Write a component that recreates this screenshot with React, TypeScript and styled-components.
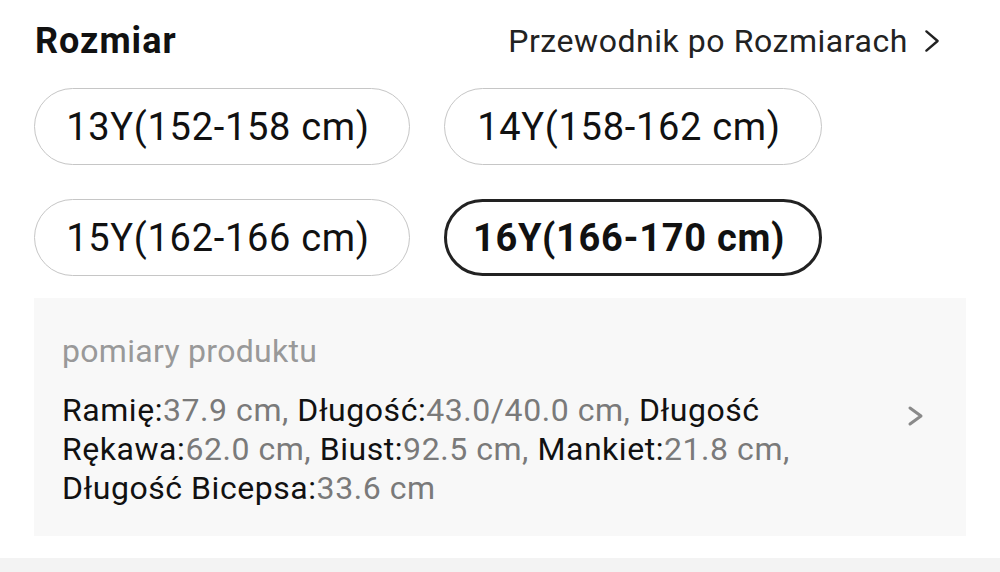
import React from "react";
import styled, { createGlobalStyle } from "styled-components";

const Global = createGlobalStyle`
  html, body { margin: 0; padding: 0; background: #fff; }
  body { font-family: Roboto, "Noto Sans", Arial, sans-serif; color: #111; }
  * { box-sizing: border-box; }
`;

const Page = styled.div`
  width: 1000px;
  height: 572px;
  overflow: hidden;
  display: flex;
  flex-direction: column;
`;

const Section = styled.section`
  padding: 0 34px;
  display: flex;
  flex-direction: column;
`;

const Header = styled.div`
  height: 82px;
  display: flex;
  align-items: center;
  justify-content: space-between;
`;

const Title = styled.h2`
  margin: 0 0 0 1px;
  font-size: 36px;
  letter-spacing: 1px;
  font-weight: 700;
  color: #111;
`;

const GuideLink = styled.a`
  display: flex;
  align-items: center;
  gap: 16px;
  font-size: 32px;
  letter-spacing: 0.55px;
  color: #222;
  text-decoration: none;
  margin-right: 26px;
`;

const Sizes = styled.div`
  margin-top: 6px;
  display: grid;
  grid-template-columns: 376px 378px;
  column-gap: 34px;
  row-gap: 34px;
`;

const Pill = styled.button<{ $active?: boolean }>`
  height: 77px;
  border-radius: 39px;
  background: #fff;
  border: ${(p) => (p.$active ? "3px solid #222" : "1.5px solid #c6c6c6")};
  font-family: inherit;
  font-size: 38px;
  font-weight: ${(p) => (p.$active ? 700 : 400)};
  letter-spacing: 0.7px;
  color: #111;
  display: flex;
  align-items: center;
  justify-content: center;
  padding: 0 8px 0 0;
`;

const Measures = styled.div`
  margin-top: 22px;
  height: 238px;
  background: #f8f8f8;
  padding: 37px 0 0 28px;
  display: flex;
  align-items: flex-start;
`;

const MeasureText = styled.div`
  width: 760px;
  display: flex;
  flex-direction: column;
`;

const Label = styled.div`
  font-size: 32px;
  letter-spacing: 0.3px;
  color: #999;
  line-height: 32px;
`;

const Details = styled.p`
  margin: 24px 0 0;
  font-size: 32px;
  letter-spacing: 0.55px;
  line-height: 39px;
  color: #111;
`;

const Value = styled.span`
  color: #7a7a7a;
`;

const ChevronCell = styled.div`
  margin-left: auto;
  margin-right: 42px;
  margin-top: 70px;
  color: #8a8a8a;
  display: flex;
`;

const BottomBar = styled.div`
  margin-top: 22px;
  flex: 1;
  background: #f3f3f3;
`;

const Chevron = ({ size, stroke, color }: { size: [number, number]; stroke: number; color: string }) => (
  <svg width={size[0]} height={size[1]} viewBox={`0 0 ${size[0]} ${size[1]}`} fill="none">
    <path
      d={`M${stroke} ${stroke} L${size[0] - stroke} ${size[1] / 2} L${stroke} ${size[1] - stroke}`}
      stroke={color}
      strokeWidth={stroke}
      strokeLinecap="round"
      strokeLinejoin="round"
    />
  </svg>
);

const items: [string, string][] = [
  ["Ramię:", "37.9 cm, "],
  ["Długość:", "43.0/40.0 cm, "],
  ["Długość Rękawa:", "62.0 cm, "],
  ["Biust:", "92.5 cm, "],
  ["Mankiet:", "21.8 cm, "],
  ["Długość Bicepsa:", "33.6 cm"],
];

const sizes = [
  { label: "13Y(152-158 cm)", active: false },
  { label: "14Y(158-162 cm)", active: false },
  { label: "15Y(162-166 cm)", active: false },
  { label: "16Y(166-170 cm)", active: true },
];

export default function App() {
  return (
    <Page>
      <Global />
      <Section>
        <Header>
          <Title>Rozmiar</Title>
          <GuideLink>
            Przewodnik po Rozmiarach
            <Chevron size={[16, 24]} stroke={2.4} color="#222" />
          </GuideLink>
        </Header>
        <Sizes>
          {sizes.map((s) => (
            <Pill key={s.label} $active={s.active}>
              {s.label}
            </Pill>
          ))}
        </Sizes>
        <Measures>
          <MeasureText>
            <Label>pomiary produktu</Label>
            <Details>
              {items.map(([k, v]) => (
                <React.Fragment key={k}>
                  {k}
                  <Value>{v}</Value>
                </React.Fragment>
              ))}
            </Details>
          </MeasureText>
          <ChevronCell>
            <Chevron size={[17, 22]} stroke={3} color="#8a8a8a" />
          </ChevronCell>
        </Measures>
      </Section>
      <BottomBar />
    </Page>
  );
}
